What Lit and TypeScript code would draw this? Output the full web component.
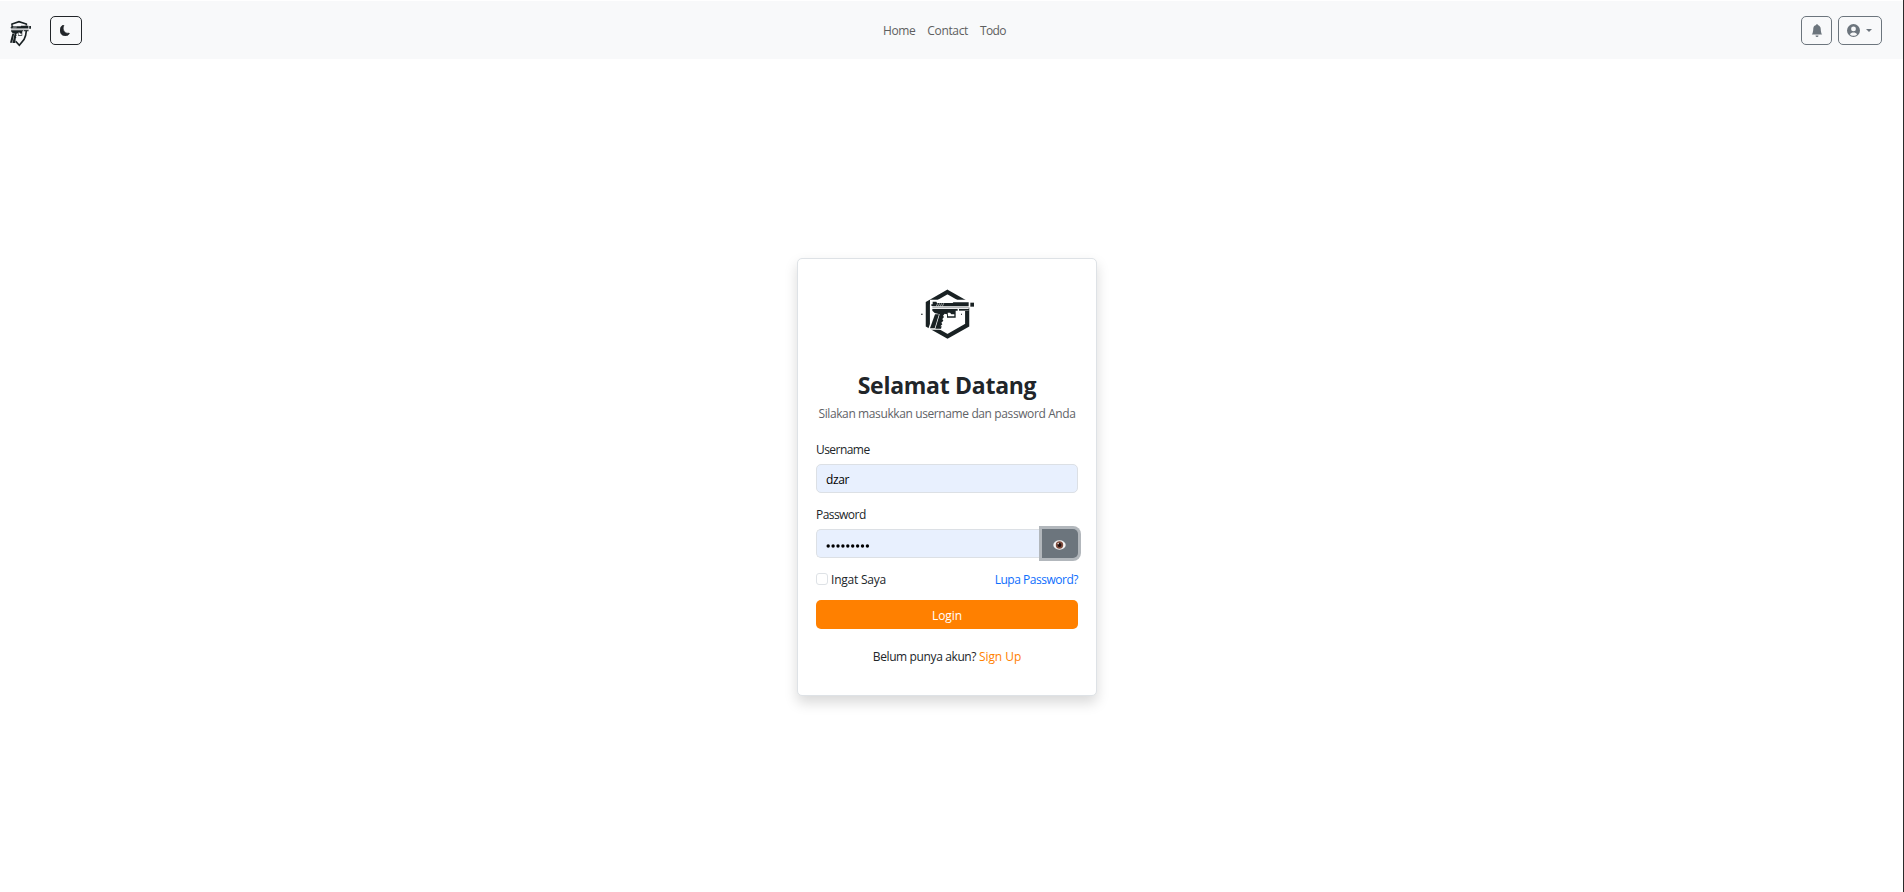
import { LitElement, html, css, svg } from 'lit';
import { customElement, property } from 'lit/decorators.js';

const pistol = svg`
  <path class="cut" d="M450 180H585V204H566V214H540V237H499V226L492 270H444L460 222L450 212Z"/>
  <path class="ink" d="M458 186H469L471 190H518L520 188H566V200H458L454 198V194H458Z"/>
  <path class="ink" d="M571 189H582V201H571Z"/>
  <path class="grey" d="M457 202H568V206H457Z"/>
  <path class="ink" d="M457 208H533V213H527V234H501V224L494 222L489 228L492 232L487 238L490 243L484 249L487 254L481 260H485L483 267H466L479 224L464 220L457 213Z"/>
  <path class="ink" d="M465 224H477L464 266H450Z"/>
  <path class="ink" d="M537 208H567V213H537Z"/>
  <path class="cut" d="M503 219H510L514 224H523V230H504Z"/>
  <path class="scratch" d="M473 191L469 200M479 191L475 200M485 191L481 200M491 191L487 200"/>`;

@customElement('brand-mark')
export class BrandMark extends LitElement {
  @property() shape: 'hexagon' | 'shield' = 'hexagon';
  static styles = css`
    :host { display: block; }
    svg { display: block; width: 100%; height: 100%; }
    .ink { fill: #192123; }
    .cut { fill: var(--mark-bg, #fff); }
    .grey { fill: #b4b6b8; }
    .ring { fill: none; stroke: #192123; stroke-width: 12.5; }
    .thin { fill: none; stroke: #192123; stroke-width: 5; }
    .scratch { fill: none; stroke: #e8eaea; stroke-width: 2; }
  `;
  render() {
    return this.shape === 'hexagon'
      ? html`<svg viewBox="420 148 162 150">
          <path class="ring" d="M502.500 157L561.500 190.500V256.500L502.500 290L443.500 256.500V190.500Z"/>
          ${pistol}
          <path class="ink" d="M423 222h5v3h-5zM543 222h3v3h-3z"/>
        </svg>`
      : html`<svg viewBox="27 60 69 80" preserveAspectRatio="none">
          <g transform="translate(-184.700 -43) scale(.477 .64)">${pistol}</g>
          <path class="thin" d="M36 76V72L57 65L79 72V76M79 92Q78 108 72 118L58 135L47 123"/>
        </svg>`;
  }
}

@customElement('top-bar')
export class TopBar extends LitElement {
  static styles = css`
    :host {
      display: grid; grid-template-columns: 1fr auto 1fr; align-items: center;
      height: 58px; margin-top: 1px; padding: 0 21px 0 9px; box-sizing: border-box;
      background: #f8f9fa; --mark-bg: #f8f9fa;
    }
    .left { display: flex; align-items: center; gap: 18px; }
    .mark { width: 23px; height: 27px; margin-top: 7px; }
    .links { display: flex; gap: 12px; padding: 2px 2px 0 0; }
    .link { color: #5e5f60; line-height: 20px; }
    .home { letter-spacing: -.4px; }
    .contact { letter-spacing: -.36px; }
    .todo { letter-spacing: -.6px; }
    .right { display: flex; justify-content: flex-end; gap: 6px; }
    .btn {
      display: flex; align-items: center; justify-content: center; box-sizing: border-box;
      height: 29px; width: 31px; padding: 0; border: 1px solid #6c757d; border-radius: 5px;
      background: none; color: #6c757d;
    }
    .moon { width: 32px; padding-right: 2px; border-color: #212529; color: #212529; }
    .account { width: 44px; gap: 6px; padding-right: 1px; }
    .icon { display: block; fill: currentColor; }
    .caret { border-top: 3px solid currentColor; border-left: 3px solid transparent; border-right: 3px solid transparent; }
  `;
  render() {
    return html`
      <div class="left">
        <brand-mark class="mark" shape="shield"></brand-mark>
        <button class="btn moon"><svg class="icon" width="10" height="11" viewBox="0 0 16 16" preserveAspectRatio="none"><path stroke="currentColor" stroke-width=".8" d="M6 .3a.77.77 0 0 1 .08.86 7.2 7.2 0 0 0-.88 3.46c0 4.02 3.28 7.28 7.32 7.28q.79 0 1.53-.16a.79.79 0 0 1 .81.32.73.73 0 0 1-.03.9A8.35 8.35 0 0 1 8.34 16C3.73 16 0 12.29 0 7.71 0 4.27 2.11 1.31 5.12.06A.75.75 0 0 1 6 .28"/></svg></button>
      </div>
      <nav class="links">
        <span class="link home">Home</span><span class="link contact">Contact</span><span class="link todo">Todo</span>
      </nav>
      <div class="right">
        <button class="btn"><svg class="icon" width="12" height="13" viewBox="0 0 16 16" preserveAspectRatio="none"><path d="M8 16a2 2 0 0 0 2-2H6a2 2 0 0 0 2 2m.995-14.901a1 1 0 1 0-1.99 0A5 5 0 0 0 3 6c0 1.098-.5 6-2 7h14c-1.500-1-2-5.902-2-7 0-2.420-1.720-4.440-4.005-4.901"/></svg></button>
        <button class="btn account"><svg class="icon" width="13" height="13" viewBox="0 0 16 16"><path fill-rule="evenodd" d="M8 0a8 8 0 1 1 0 16A8 8 0 0 1 8 0M8 3a3 3 0 1 0 0 6a3 3 0 0 0 0-6M3.600 12.600C4.500 14 6 14.500 8 14.500s3.500-.5 4.400-1.900C11.500 11 10 10.400 8 10.400s-3.500.6-4.400 2.200"/></svg><span class="caret"></span></button>
      </div>`;
  }
}

@customElement('login-card')
export class LoginCard extends LitElement {
  static styles = css`
    :host {
      display: flex; flex-direction: column; box-sizing: border-box; width: 300px; height: 438px;
      padding: 30px 18px 0; border: 1px solid #dee2e6; border-radius: 5px; background: #fff;
      box-shadow: 0 6.400px 12.800px rgba(0, 0, 0, .15);
    }
    .mark { width: 54px; height: 50px; align-self: center; }
    .title { margin: 30px 0 0; text-align: center; font-size: 23px; font-weight: 700; line-height: 32px; letter-spacing: -.28px; }
    .sub { text-align: center; line-height: 20px; margin-top: 3px; color: #5f6367; letter-spacing: -.39px; white-space: nowrap; }
    .label { line-height: 20px; }
    .l-user { margin-top: 16px; letter-spacing: -.55px; }
    .l-pass { margin-top: 12px; letter-spacing: -.55px; }
    .field {
      display: flex; align-items: center; box-sizing: border-box; height: 29px; margin-top: 4px; padding: 2px 0 0 9px;
      border: 1px solid #dce0e5; border-radius: 5px; background: #e8f0fe; color: #000; letter-spacing: -.35px;
    }
    .group { display: flex; margin-top: 4px; }
    .group .field { flex: 1; margin-top: 0; border-right: 0; border-radius: 5px 0 0 5px; }
    .dots { display: block; width: 44px; height: 4px; margin-top: 2px; fill: #000; }
    .eye {
      display: flex; align-items: center; justify-content: center; width: 36px; height: 29px; padding: 2px 1px 0 0;
      border: 0; border-radius: 0 5px 5px 0; background: #6c757d; box-shadow: 0 0 0 3px #b2b7bc;
    }
    .row { display: flex; align-items: center; margin-top: 12px; line-height: 20px; }
    .check { box-sizing: border-box; width: 12px; height: 12px; margin-bottom: 2px; border: 1px solid #dee2e6; border-radius: 3px; }
    .remember { margin-left: 3px; letter-spacing: -.22px; }
    .forgot { margin-left: auto; color: #0d6efd; letter-spacing: -.48px; }
    .submit { height: 29px; margin-top: 10px; padding: 1px 0 0; border: 0; border-radius: 5px; background: #ff8000; color: #fff; font: inherit; letter-spacing: -.1px; }
    .foot { margin-top: 18px; text-align: center; line-height: 20px; letter-spacing: -.38px; }
    .signup { color: #ff8000; letter-spacing: -.05px; }
  `;
  render() {
    return html`
      <brand-mark class="mark"></brand-mark>
      <h1 class="title">Selamat Datang</h1>
      <div class="sub">Silakan masukkan username dan password Anda</div>
      <div class="label l-user">Username</div>
      <div class="field">dzar</div>
      <div class="label l-pass">Password</div>
      <div class="group">
        <div class="field"><svg class="dots" viewBox="0 0 44 4">${Array.from({ length: 9 }, (_, i) => svg`<circle cx=${2.2 + i * 4.9} cy="2" r="1.700"/>`)}</svg></div>
        <button class="eye"><svg width="13" height="10" viewBox="0 0 13 10"><ellipse cx="6.500" cy="5" rx="6.200" ry="4.700" fill="#f4f4f4"/><circle cx="6.500" cy="5" r="3.700" fill="#7d4a3b"/><circle cx="6.500" cy="5" r="1.900" fill="#1d1010"/><circle cx="5.200" cy="3.600" r=".8" fill="#e4d8d4"/></svg></button>
      </div>
      <div class="row"><span class="check"></span><span class="remember">Ingat Saya</span><span class="forgot">Lupa Password?</span></div>
      <button class="submit">Login</button>
      <div class="foot">Belum punya akun? <span class="signup">Sign Up</span></div>`;
  }
}

@customElement('app-root')
export class AppRoot extends LitElement {
  static styles = css`
    :host {
      display: flex; flex-direction: column; box-sizing: border-box; width: 100vw; height: 100vh; overflow: hidden;
      border-right: 1px solid #2b2b2b; background: #fff; color: #212529; font: 12px "Open Sans", "Noto Sans", sans-serif;
    }
    .main { display: flex; justify-content: center; padding: 199px 9px 0 0; }
  `;
  render() {
    return html`<top-bar></top-bar><main class="main"><login-card></login-card></main>`;
  }
}
